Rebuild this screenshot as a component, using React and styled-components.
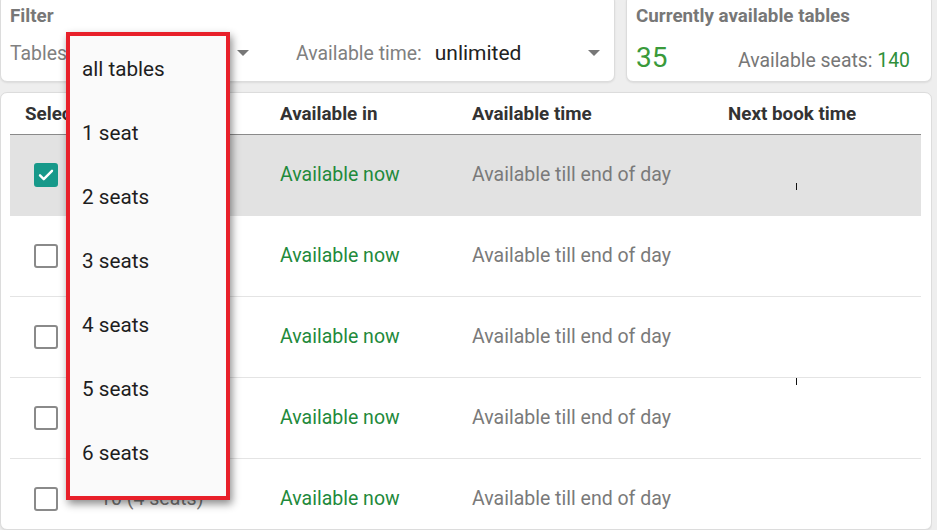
import React from 'react';
import styled, { createGlobalStyle } from 'styled-components';

const GlobalStyle = createGlobalStyle`
  html, body {
    margin: 0;
    padding: 0;
    background: #eeeeee;
    font-family: Roboto, "Noto Sans", "Liberation Sans", sans-serif;
    overflow: hidden;
  }
`;

const Page = styled.div`
  position: relative;
  width: 932px;
  height: 530px;
  overflow: hidden;
`;

const TopRow = styled.div`
  display: flex;
  gap: 11px;
  margin-top: -6px;
`;

const Card = styled.div`
  background: #fff;
  border: 1px solid #dcdcdc;
  border-radius: 7px;
  box-shadow: 0 1px 2px rgba(0, 0, 0, 0.08);
  box-sizing: border-box;
`;

const FilterCard = styled(Card)`
  width: 615px;
  height: 88px;
  padding: 10px 10px 0 9px;
`;

const StatsCard = styled(Card)`
  flex: 1;
  height: 88px;
  padding: 10px 10px 0 9px;
`;

const CardTitle = styled.div`
  font-size: 18.8px;
  font-weight: 700;
  color: #777;
  line-height: 22px;
`;

const FilterRow = styled.div`
  display: flex;
  align-items: center;
  height: 30px;
  margin-top: 11px;
`;

const Field = styled.div`
  display: flex;
  align-items: center;
  width: ${(p) => p.width}px;
  padding-right: ${(p) => p.pr || 0}px;
  box-sizing: border-box;
`;

const Label = styled.span`
  font-size: 19.4px;
  color: #808080;
  margin-right: 13px;
`;

const Value = styled.span`
  flex: 1;
  font-size: 21px;
  color: #222;
`;

const Arrow = styled.span`
  width: 0;
  height: 0;
  border-left: 6px solid transparent;
  border-right: 6px solid transparent;
  border-top: 6px solid #777;
`;

const StatsRow = styled.div`
  display: flex;
  align-items: baseline;
  justify-content: space-between;
  margin-top: 14px;
  padding-right: 11px;
`;

const Count = styled.span`
  font-size: 28px;
  color: #3a9a3a;
`;

const Seats = styled.span`
  font-size: 19.4px;
  color: #777;

  b {
    font-weight: 400;
    color: #2f8f3a;
  }
`;

const TableCard = styled(Card)`
  margin-top: 10px;
  height: 438px;
  overflow: hidden;
  padding: 0 10px 0 9px;
`;

const cols = '80px 180px 192px 256px 1fr';

const HeaderRow = styled.div`
  display: grid;
  grid-template-columns: ${cols};
  height: 40px;
  padding-top: 1px;
  align-items: center;
  border-bottom: 1px solid #8a8a8a;
`;

const HeadCell = styled.div`
  font-size: 18.8px;
  font-weight: 700;
  color: #333;
  padding-left: ${(p) => p.pl ?? 10}px;
  white-space: nowrap;
`;

const Row = styled.div`
  position: relative;
  display: grid;
  grid-template-columns: ${cols};
  height: 80px;
  align-items: center;
  background: ${(p) => (p.selected ? '#e2e2e2' : 'transparent')};
  border-bottom: 1px solid ${(p) => (p.selected ? '#e2e2e2' : '#e4e4e4')};
`;

const Cell = styled.div`
  font-size: 19.5px;
  color: ${(p) => p.color || '#7a7a7a'};
  padding-left: ${(p) => p.pl ?? 10}px;
  white-space: nowrap;
  margin-top: -1px;
`;

const Box = styled.span`
  display: flex;
  align-items: center;
  justify-content: center;
  width: 24px;
  height: 24px;
  box-sizing: border-box;
  border-radius: 3px;
  border: 2px solid ${(p) => (p.checked ? '#17998a' : '#8a8a8a')};
  background: ${(p) => (p.checked ? '#17998a' : '#fff')};
`;

const Mark = styled.span`
  position: absolute;
  left: 786px;
  top: ${(p) => p.top}px;
  width: 1px;
  height: 7px;
  background: #111;
`;

const Dropdown = styled.ul`
  position: absolute;
  left: 66px;
  top: 32px;
  width: 164px;
  height: 468px;
  box-sizing: border-box;
  margin: 0;
  padding: 1px 0 0;
  list-style: none;
  background: #fafafa;
  border: 4px solid #e8202a;
  box-shadow: 2px 4px 8px rgba(0, 0, 0, 0.45);
`;

const Option = styled.li`
  height: 64px;
  display: flex;
  align-items: center;
  padding-left: 12px;
  font-size: 20.7px;
  color: #1e1e1e;
`;

// names of rows 1-4 sit fully under the open dropdown
const rows = [
  { name: '', selected: true },
  { name: '' },
  { name: '' },
  { name: '' },
  { name: '10 (4 seats)' },
];

const options = ['all tables', '1 seat', '2 seats', '3 seats', '4 seats', '5 seats', '6 seats'];

const Check = () => (
  <svg width="18" height="18" viewBox="0 0 24 24">
    <path d="M4 12.5l5 5L20 6.5" fill="none" stroke="#fff" strokeWidth="3.2" strokeLinecap="round" strokeLinejoin="round" />
  </svg>
);

const App = () => (
  <Page>
    <GlobalStyle />
    <TopRow>
      <FilterCard>
        <CardTitle>Filter</CardTitle>
        <FilterRow>
          <Field width={286} pr={47}>
            <Label>Tables:</Label>
            <Value />
            <Arrow />
          </Field>
          <Field width={304} pr={0}>
            <Label>Available time:</Label>
            <Value>unlimited</Value>
            <Arrow />
          </Field>
        </FilterRow>
      </FilterCard>
      <StatsCard>
        <CardTitle>Currently available tables</CardTitle>
        <StatsRow>
          <Count>35</Count>
          <Seats>
            Available seats: <b>140</b>
          </Seats>
        </StatsRow>
      </StatsCard>
    </TopRow>
    <TableCard>
      <HeaderRow>
        <HeadCell pl={15}>Select</HeadCell>
        <HeadCell>Table</HeadCell>
        <HeadCell>Available in</HeadCell>
        <HeadCell>Available time</HeadCell>
        <HeadCell>Next book time</HeadCell>
      </HeaderRow>
      {rows.map((r, i) => (
        <Row key={i} selected={r.selected}>
          <Cell pl={24}>
            <Box checked={r.selected}>{r.selected && <Check />}</Box>
          </Cell>
          <Cell>{r.name}</Cell>
          <Cell color="#1f8a3c">Available now</Cell>
          <Cell>Available till end of day</Cell>
          <Cell />
          {i === 0 && <Mark top={48} />}
          {i === 3 && <Mark top={0} />}
        </Row>
      ))}
    </TableCard>
    <Dropdown>
      {options.map((o) => (
        <Option key={o}>{o}</Option>
      ))}
    </Dropdown>
  </Page>
);

export default App;
